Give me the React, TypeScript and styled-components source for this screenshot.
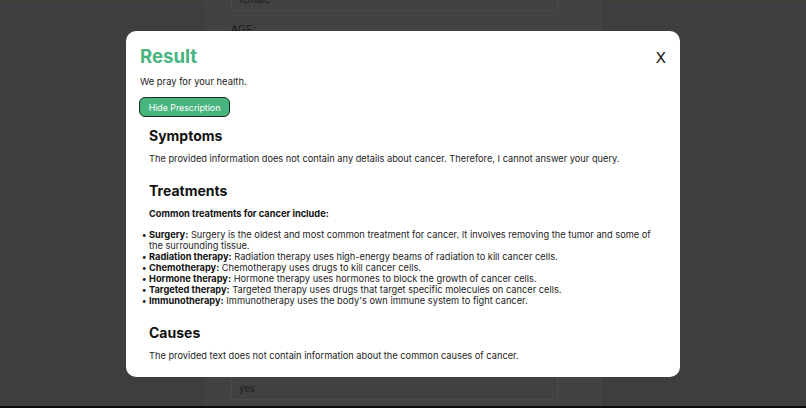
import React from "react";
import styled, { createGlobalStyle } from "styled-components";

const Global = createGlobalStyle`
  html, body { margin: 0; padding: 0; }
  body {
    width: 806px;
    height: 408px;
    overflow: hidden;
    background: #3e3e3e;
    font-family: Inter, "Noto Sans", Arial, sans-serif;
  }
`;

const Page = styled.div`
  position: relative;
  width: 806px;
  height: 408px;
  display: flex;
  flex-direction: column;
  background: #3e3e3e;
`;

const TopTint = styled.div`
  height: 3px;
  background: #433f3b;
  flex: none;
`;

const Main = styled.main`
  flex: 1;
  display: flex;
  justify-content: center;
  margin-top: -3px;
`;

const Column = styled.div`
  width: 402px;
  background: #424242;
  border-left: 1px solid #3a3a3a;
  border-right: 1px solid #3a3a3a;
  display: flex;
  flex-direction: column;
  justify-content: space-between;
  padding: 0 45px 0 28px;
  box-sizing: border-box;
  overflow: hidden;
`;

const Field = styled.div<{ $h: number }>`
  height: ${(p) => p.$h}px;
  border: 1px solid #4a4a4a;
  background: #414141;
  border-radius: 2px;
  display: flex;
  align-items: center;
  padding: 0 7px;
  font-size: 9.6px;
  color: #1e1e1e;
  box-sizing: border-box;
`;

const TopGroup = styled.div`
  display: flex;
  flex-direction: column;
  margin-top: -12px;
`;

const Label = styled.div`
  margin-top: 12px;
  font-size: 10.5px;
  color: #1c1c1c;
  font-family: "Liberation Sans", Arial, sans-serif;
`;

const BottomGroup = styled.div`
  margin-bottom: 6px;
`;

const Footer = styled.div`
  height: 2px;
  background: #0c0c0c;
  flex: none;
`;

const Modal = styled.div`
  position: absolute;
  left: 126px;
  top: 31px;
  width: 554px;
  height: 346px;
  background: #ffffff;
  border-radius: 10px;
  box-sizing: border-box;
  padding: 11px 14px 0 14px;
  color: #222;
`;

const Header = styled.div`
  display: flex;
  justify-content: space-between;
  align-items: flex-start;
`;

const Title = styled.h1`
  margin: 0;
  font-size: 18.6px;
  font-weight: 700;
  color: #48b57f;
  line-height: 28px;
`;

const Close = styled.button`
  border: none;
  background: none;
  padding: 0;
  margin-top: 7px;
  font-family: Inter, sans-serif;
  font-size: 15px;
  font-weight: 400;
  color: #111;
  line-height: 18px;
  cursor: pointer;
`;

const Lead = styled.p`
  margin: 4px 0 0 0;
  font-size: 9.4px;
  line-height: 16px;
  color: #222;
`;

const ToggleButton = styled.button`
  display: block;
  margin: 7px 0 0 -1px;
  height: 20px;
  width: 91px;
  background: #48b57f;
  color: #fff;
  border: 1.5px solid #1b2e23;
  border-radius: 6px;
  font-family: Inter, sans-serif;
  font-size: 8.8px;
  padding: 0;
`;

const Content = styled.div`
  padding-left: 9px;
`;

const SectionTitle = styled.h2<{ $top: number }>`
  margin: ${(p) => p.$top}px 0 0 0;
  font-size: 14px;
  font-weight: 700;
  line-height: 18px;
  color: #111;
`;

const Text = styled.p<{ $top: number }>`
  margin: ${(p) => p.$top}px 0 0 0;
  font-size: 9.25px;
  line-height: 12px;
  color: #222;
`;

const Strong = styled.strong`
  font-weight: 700;
  color: #111;
`;

const List = styled.ul`
  margin: 8.5px 0 0 -7px;
  padding: 0;
  list-style: none;
  font-size: 9.25px;
  line-height: 11px;
  color: #222;
`;

const Item = styled.li`
  display: flex;
`;

const Bullet = styled.span`
  flex: none;
  width: 7px;
  font-weight: 700;
`;

const ItemText = styled.span`
  flex: 1;
`;

const treatments: [string, string][] = [
  ["Surgery:", "Surgery is the oldest and most common treatment for cancer. It involves removing the tumor and some of the surrounding tissue."],
  ["Radiation therapy:", "Radiation therapy uses high-energy beams of radiation to kill cancer cells."],
  ["Chemotherapy:", "Chemotherapy uses drugs to kill cancer cells."],
  ["Hormone therapy:", "Hormone therapy uses hormones to block the growth of cancer cells."],
  ["Targeted therapy:", "Targeted therapy uses drugs that target specific molecules on cancer cells."],
  ["Immunotherapy:", "Immunotherapy uses the body's own immune system to fight cancer."],
];

export default function App() {
  return (
    <Page>
      <Global />
      <TopTint />
      <Main>
        <Column>
          <TopGroup>
            <Field $h={23}>female</Field>
            <Label>AGE:</Label>
          </TopGroup>
          <BottomGroup>
            <Field $h={24}>yes</Field>
          </BottomGroup>
        </Column>
      </Main>
      <Footer />
      <Modal>
        <Header>
          <Title>Result</Title>
          <Close aria-label="close">X</Close>
        </Header>
        <Lead>We pray for your health.</Lead>
        <ToggleButton>Hide Prescription</ToggleButton>
        <Content>
          <SectionTitle $top={9.5}>Symptoms</SectionTitle>
          <Text $top={8}>
            The provided information does not contain any details about cancer. Therefore, I cannot answer your query.
          </Text>
          <SectionTitle $top={17.5}>Treatments</SectionTitle>
          <Text $top={8}>
            <Strong>Common treatments for cancer include:</Strong>
          </Text>
          <List>
            {treatments.map(([k, v]) => (
              <Item key={k}>
                <Bullet>•</Bullet>
                <ItemText>
                  <Strong>{k}</Strong> {v}
                </ItemText>
              </Item>
            ))}
          </List>
          <SectionTitle $top={18}>Causes</SectionTitle>
          <Text $top={8}>
            The provided text does not contain information about the common causes of cancer.
          </Text>
        </Content>
      </Modal>
    </Page>
  );
}
